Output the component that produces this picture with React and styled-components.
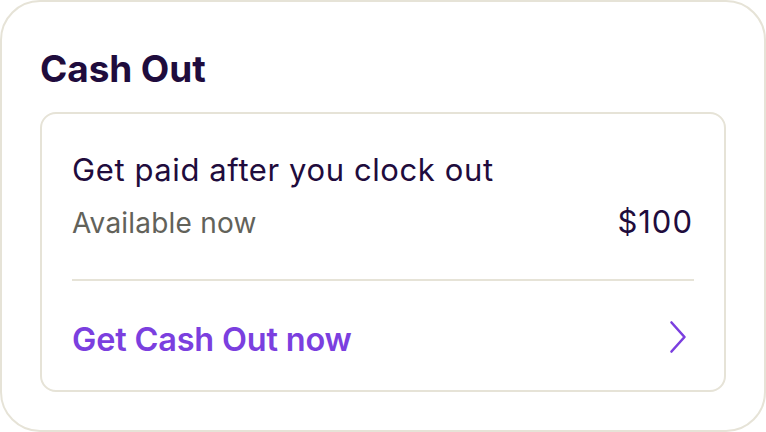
import React from "react";
import styled, { createGlobalStyle } from "styled-components";

const Global = createGlobalStyle`
  html, body { margin: 0; padding: 0; background: #ffffff; }
  body { font-family: Inter, "Noto Sans", sans-serif; -webkit-font-smoothing: antialiased; }
  * { box-sizing: border-box; }
`;

const Panel = styled.section`
  width: 766px;
  height: 432px;
  border: 2px solid #e6e3d7;
  border-radius: 40px;
  padding: 45px 38px 0 38px;
  background: #fff;
  display: flex;
  flex-direction: column;
  gap: 21px;
`;

const Title = styled.h1`
  margin: 0;
  font-size: 37px;
  line-height: 44px;
  font-weight: 700;
  color: #1f0c3d;
  letter-spacing: -0.1px;
`;

const Card = styled.div`
  border: 2px solid #e6e3d7;
  border-radius: 16px;
  padding: 37px 30px 0 30px;
  display: flex;
  flex-direction: column;
`;

const Headline = styled.div`
  font-size: 31px;
  line-height: 38px;
  color: #1f0c3d;
  font-weight: 400;
  letter-spacing: 0.6px;
`;

const Row = styled.div`
  display: flex;
  justify-content: space-between;
  align-items: baseline;
  margin-top: 16px;
  padding-bottom: 39px;
  border-bottom: 2px solid #e6e3d7;
`;

const Muted = styled.span`
  font-size: 28px;
  line-height: 34px;
  color: #62625a;
  letter-spacing: 0.2px;
`;

const Amount = styled.span`
  font-size: 31px;
  line-height: 34px;
  color: #1f0c3d;
  letter-spacing: 1px;
  margin-right: 1px;
`;

const Action = styled.button`
  all: unset;
  cursor: pointer;
  display: flex;
  align-items: center;
  justify-content: space-between;
  height: 109px;
  color: #7b3fdf;
  font-size: 32.5px;
  font-weight: 600;
  letter-spacing: -0.2px;
`;

const ActionLabel = styled.span`
  padding-top: 8px;
`;

const Chevron = styled.svg`
  width: 20px;
  height: 36px;
  margin: 3px 5px 0 0;
`;

export default function App() {
  return (
    <>
      <Global />
      <Panel>
        <Title>Cash Out</Title>
        <Card>
          <Headline>Get paid after you clock out</Headline>
          <Row>
            <Muted>Available now</Muted>
            <Amount>$100</Amount>
          </Row>
          <Action>
            <ActionLabel>Get Cash Out now</ActionLabel>
            <Chevron viewBox="0 0 20 36" fill="none">
              <path d="M2.5 3.5 L15.5 18 L2.5 32.5" stroke="#7b3fdf" strokeWidth="2.6" strokeLinecap="round" strokeLinejoin="round" />
            </Chevron>
          </Action>
        </Card>
      </Panel>
    </>
  );
}
